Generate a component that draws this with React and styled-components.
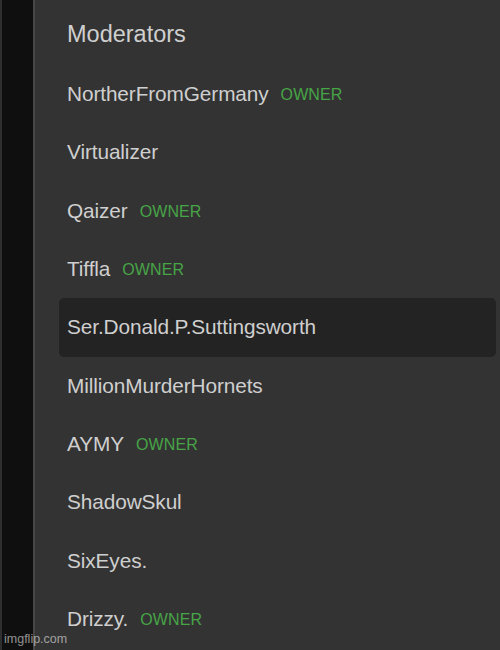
import React from "react";
import styled, { createGlobalStyle } from "styled-components";

const Global = createGlobalStyle`
  html, body { margin: 0; padding: 0; background: #333333; }
  #root { width: 500px; height: 650px; }
`;

const Page = styled.div`
  position: relative;
  display: flex;
  width: 500px;
  height: 650px;
  overflow: hidden;
  background: #333333;
  font-family: "Liberation Sans", Arial, sans-serif;
`;

const Edge = styled.div`
  width: 2px;
  background: #2f2f2f;
  flex-shrink: 0;
`;

const Rail = styled.div`
  width: 31px;
  flex-shrink: 0;
  background: #0f0f0f;
  border-right: 2px solid #474747;
`;

const Main = styled.div`
  flex: 1;
  display: flex;
  flex-direction: column;
  padding: 0 4px 0 24px;
`;

const Heading = styled.div`
  height: 65px;
  display: flex;
  align-items: center;
  padding: 3px 0 0 8px;
  box-sizing: border-box;
  color: #cfcfcf;
  font-size: 23.5px;
`;

const Row = styled.div`
  height: 58.33px;
  display: flex;
  align-items: center;
  gap: 12px;
  padding-left: 8px;
  box-sizing: border-box;
  border-radius: 5px;
  background: ${(p) => (p.$active ? "#232323" : "transparent")};
`;

const Name = styled.span`
  color: #cfcfcf;
  font-size: 20.8px;
  letter-spacing: -0.1px;
`;

const Badge = styled.span`
  color: #47a447;
  font-size: 16px;
  letter-spacing: 0.1px;
  margin-top: 2px;
`;

const Watermark = styled.div`
  position: absolute;
  left: 4px;
  bottom: 4px;
  color: rgba(255, 255, 255, 0.55);
  font-size: 12.5px;
  font-family: "Liberation Sans", Arial, sans-serif;
`;

const mods = [
  { name: "NortherFromGermany", owner: true },
  { name: "Virtualizer" },
  { name: "Qaizer", owner: true },
  { name: "Tiffla", owner: true },
  { name: "Ser.Donald.P.Suttingsworth", active: true },
  { name: "MillionMurderHornets" },
  { name: "AYMY", owner: true },
  { name: "ShadowSkul" },
  { name: "SixEyes." },
  { name: "Drizzy.", owner: true },
];

export default function App() {
  return (
    <>
      <Global />
      <Page>
        <Edge />
        <Rail />
        <Main>
          <Heading>Moderators</Heading>
          {mods.map((m) => (
            <Row key={m.name} $active={m.active}>
              <Name>{m.name}</Name>
              {m.owner && <Badge>OWNER</Badge>}
            </Row>
          ))}
        </Main>
        <Watermark>imgflip.com</Watermark>
      </Page>
    </>
  );
}
